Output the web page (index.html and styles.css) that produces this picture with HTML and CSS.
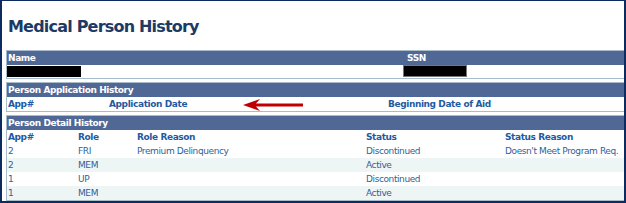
FILE: index.html
```html
<!DOCTYPE html>
<html lang="en">
<head>
    <meta charset="UTF-8">
    <title>Medical Person History</title>
    <link rel="stylesheet" href="styles.css">
</head>
<body>
<div class="frame">
    <h1 class="title">Medical Person History</h1>

    <div class="panel">
        <div class="bar cols-person">
            <span>Name</span>
            <span>SSN</span>
        </div>
        <div class="row cols-person">
            <span><i class="redact redact-name"></i></span>
            <span><i class="redact redact-ssn"></i></span>
        </div>
    </div>

    <div class="panel">
        <div class="bar">
            <span>Person Application History</span>
        </div>
        <div class="row head cols-app arrow-row">
            <span>App#</span>
            <span>Application Date</span>
            <span>Beginning Date of Aid</span>
            <svg class="arrow" width="60" height="14" viewBox="0 0 60 14">
                <path d="M0 7 L17 1 L13 5.5 L60 5.5 L60 8.5 L13 8.5 L17 13 Z" fill="#c00000"/>
            </svg>
        </div>
    </div>

    <div class="panel">
        <div class="bar">
            <span>Person Detail History</span>
        </div>
        <div class="row head cols-detail">
            <span>App#</span>
            <span>Role</span>
            <span>Role Reason</span>
            <span>Status</span>
            <span>Status Reason</span>
        </div>
        <div class="row cols-detail">
            <span>2</span>
            <span>FRI</span>
            <span>Premium Delinquency</span>
            <span>Discontinued</span>
            <span>Doesn't Meet Program Req.</span>
        </div>
        <div class="row alt cols-detail">
            <span>2</span>
            <span>MEM</span>
            <span></span>
            <span>Active</span>
            <span></span>
        </div>
        <div class="row cols-detail">
            <span>1</span>
            <span>UP</span>
            <span></span>
            <span>Discontinued</span>
            <span></span>
        </div>
        <div class="row alt cols-detail">
            <span>1</span>
            <span>MEM</span>
            <span></span>
            <span>Active</span>
            <span></span>
        </div>
    </div>
</div>
</body>
</html>
```

FILE: styles.css
```css
*{
  margin: 0;
  padding: 0;
  box-sizing: border-box;
}
body{
  background: #fff;
  font-family: "DejaVu Sans", Verdana, sans-serif;
}
.frame{
  width: 626px;
  height: 203px;
  border-top: 1px solid #0d2b5e;
  border-left: 2px solid #0d2b5e;
  border-right: 2px solid #0d2b5e;
  border-bottom: 2px solid #0d2b5e;
  padding-left: 4px;
  overflow: hidden;
}
.title{
  font-size: 16px;
  line-height: 20px;
  letter-spacing: -0.8px;
  color: #1c3a63;
  padding: 16px 0 0 2px;
  margin-bottom: 13px;
}
.panel{
  margin-right: -20px;
  border: 1px solid #a9bccb;
  margin-bottom: 3px;
}
.bar, .row{
  display: grid;
  font-size: 9px;
  letter-spacing: -0.4px;
  line-height: 14px;
  height: 14px;
}
.bar{
  background: #4f6896;
  color: #fff;
  font-weight: bold;
}
.bar span, .row span{
  padding-left: 1px;
  white-space: nowrap;
}
.row{
  color: #2f5f9a;
}
.row.head{
  color: #1f5aa2;
  font-weight: bold;
}
.row.alt{
  background: #eef5f5;
}
.cols-person{
  grid-template-columns: 399px 1fr;
}
.cols-app{
  grid-template-columns: 101px 279px 1fr;
}
.cols-detail{
  grid-template-columns: 70px 59px 229px 139px 1fr;
}
.cols-person.row{
  height: 13px;
}
.redact{
  display: inline-block;
  background: #000;
  vertical-align: top;
}
.redact-name{
  width: 74px;
  height: 11px;
  margin: 1px 0 0 -1px;
}
.redact-ssn{
  width: 64px;
  height: 12px;
  margin-left: -4px;
  border: 1px solid #777;
}
.arrow-row{
  position: relative;
}
.arrow{
  position: absolute;
  left: 236px;
  top: 1px;
}
```
